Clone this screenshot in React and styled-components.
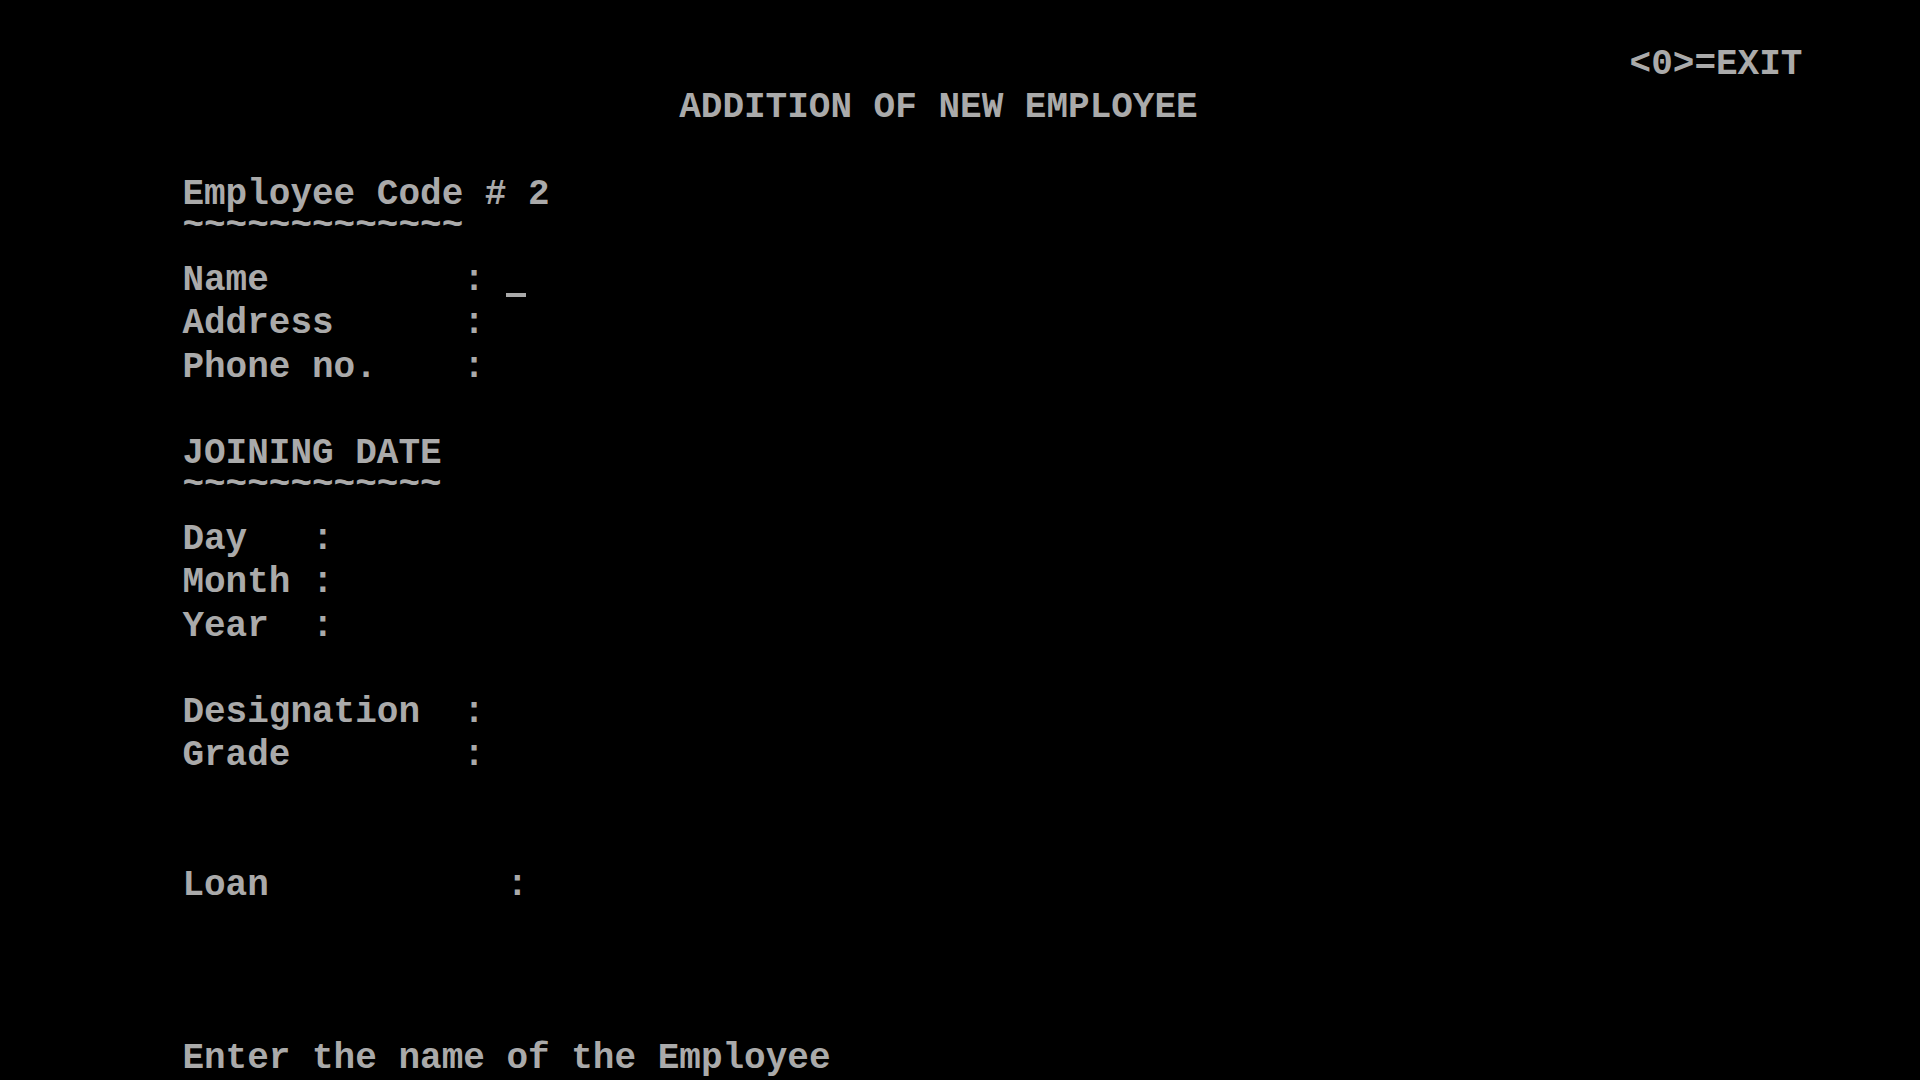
import styled, { createGlobalStyle } from "styled-components";

const CELL_W = 21.6;
const CELL_H = 43.2;

const Global = createGlobalStyle`
    html, body {
        margin: 0;
        padding: 0;
        background: #000;
        overflow: hidden;
    }
`

const Screen = styled.div`
    width: 1920px;
    height: 1080px;
    box-sizing: border-box;
    padding: 0 96px;
    background: #000;
    color: #aaaaaa;
    font-family: "Liberation Mono", "DejaVu Sans Mono", monospace;
    font-weight: 700;
    font-size: 36px;
    display: grid;
    grid-template-rows: repeat(25, ${CELL_H}px);
`

const Line = styled.div`
    height: ${CELL_H}px;
    line-height: ${(p) => (p.$tilde ? "20px" : `${CELL_H}px`)};
    padding-left: ${(p) => (p.$col || 0) * CELL_W}px;
    white-space: pre;
    display: flex;
    align-items: flex-start;
`

const Label = styled.span`
    display: inline-block;
    width: ${(p) => p.$w}ch;
`

const Colon = styled.span`
    display: inline-block;
    width: 2ch;
`

const Cursor = styled.span`
    display: inline-block;
    width: 1ch;
    height: ${CELL_H}px;
    background: linear-gradient(#aaaaaa, #aaaaaa) left 0 bottom 5px / 20px 4px no-repeat;
`

function Field({ label, w, cursor }) {
    return (
        <Line $col={4}>
            <Label $w={w}>{label}</Label>
            <Colon>:</Colon>
            {cursor && <Cursor />}
        </Line>
    )
}

export default function App() {
    return (
        <>
            <Global />
            <Screen>
                <Line />
                <Line $col={71}>{"<0>=EXIT"}</Line>
                <Line $col={27}>ADDITION OF NEW EMPLOYEE</Line>
                <Line />
                <Line $col={4}>Employee Code # 2</Line>
                <Line $col={4} $tilde>~~~~~~~~~~~~~</Line>
                <Field label="Name" w={13} cursor />
                <Field label="Address" w={13} />
                <Field label="Phone no." w={13} />
                <Line />
                <Line $col={4}>JOINING DATE</Line>
                <Line $col={4} $tilde>~~~~~~~~~~~~</Line>
                <Field label="Day" w={6} />
                <Field label="Month" w={6} />
                <Field label="Year" w={6} />
                <Line />
                <Field label="Designation" w={13} />
                <Field label="Grade" w={13} />
                <Line />
                <Line />
                <Field label="Loan" w={15} />
                <Line />
                <Line />
                <Line />
                <Line $col={4}>Enter the name of the Employee</Line>
            </Screen>
        </>
    )
}
